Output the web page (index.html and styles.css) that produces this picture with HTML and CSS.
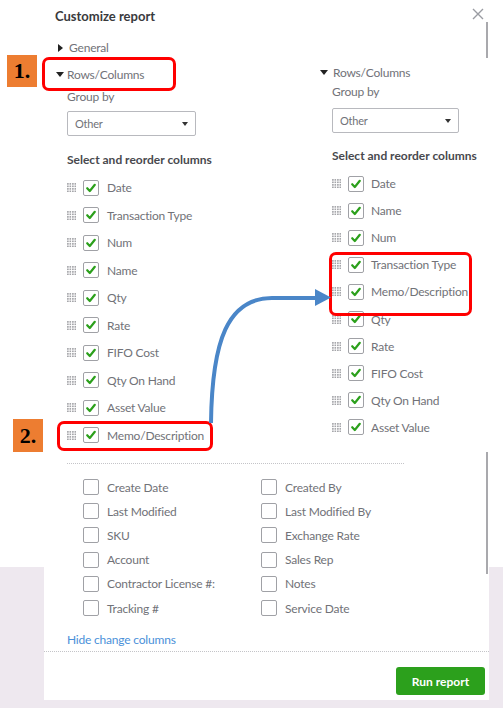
FILE: index.html
```html
<!DOCTYPE html>
<html>
<head>
    <meta charset="utf-8" />
    <title>Customize report</title>
    <link rel="stylesheet" href="styles.css">
</head>
<body>
    <section class="panel">
        <header class="head">
            <h1>Customize report</h1>
            <svg class="close" width="12" height="12" viewBox="0 0 12 12"><path d="M1 1L11 11M11 1L1 11" stroke="#9a9ca2" stroke-width="1.4" fill="none"/></svg>
        </header>
        <div class="scroll">
            <div class="cols">
                <!-- before -->
                <div class="col col-left">
                    <div class="toggle closed">General</div>
                    <div class="toggle open">Rows/Columns</div>
                    <div class="sub">
                        <div class="label">Group by</div>
                        <div class="select">Other<span class="caret"></span></div>
                        <div class="heading">Select and reorder columns</div>
                        <ul class="list">
                            <li><span class="grip"></span><span class="cb on"></span>Date</li>
                            <li><span class="grip"></span><span class="cb on"></span>Transaction Type</li>
                            <li><span class="grip"></span><span class="cb on"></span>Num</li>
                            <li><span class="grip"></span><span class="cb on"></span>Name</li>
                            <li><span class="grip"></span><span class="cb on"></span>Qty</li>
                            <li><span class="grip"></span><span class="cb on"></span>Rate</li>
                            <li><span class="grip"></span><span class="cb on"></span>FIFO Cost</li>
                            <li><span class="grip"></span><span class="cb on"></span>Qty On Hand</li>
                            <li><span class="grip"></span><span class="cb on"></span>Asset Value</li>
                            <li><span class="grip"></span><span class="cb on"></span>Memo/Description</li>
                        </ul>
                    </div>
                </div>
                <!-- after -->
                <div class="col col-right">
                    <div class="toggle open">Rows/Columns</div>
                    <div class="sub">
                        <div class="label">Group by</div>
                        <div class="select">Other<span class="caret"></span></div>
                        <div class="heading">Select and reorder columns</div>
                        <ul class="list">
                            <li><span class="grip"></span><span class="cb on"></span>Date</li>
                            <li><span class="grip"></span><span class="cb on"></span>Name</li>
                            <li><span class="grip"></span><span class="cb on"></span>Num</li>
                            <li><span class="grip"></span><span class="cb on"></span>Transaction Type</li>
                            <li><span class="grip"></span><span class="cb on"></span>Memo/Description</li>
                            <li><span class="grip"></span><span class="cb on"></span>Qty</li>
                            <li><span class="grip"></span><span class="cb on"></span>Rate</li>
                            <li><span class="grip"></span><span class="cb on"></span>FIFO Cost</li>
                            <li><span class="grip"></span><span class="cb on"></span>Qty On Hand</li>
                            <li><span class="grip"></span><span class="cb on"></span>Asset Value</li>
                        </ul>
                    </div>
                </div>
            </div>
            <div class="divider"></div>
            <ul class="extra">
                <li><span class="cb"></span>Create Date</li>
                <li><span class="cb"></span>Created By</li>
                <li><span class="cb"></span>Last Modified</li>
                <li><span class="cb"></span>Last Modified By</li>
                <li><span class="cb"></span>SKU</li>
                <li><span class="cb"></span>Exchange Rate</li>
                <li><span class="cb"></span>Account</li>
                <li><span class="cb"></span>Sales Rep</li>
                <li><span class="cb"></span>Contractor License #:</li>
                <li><span class="cb"></span>Notes</li>
                <li><span class="cb"></span>Tracking #</li>
                <li><span class="cb"></span>Service Date</li>
            </ul>
            <a class="link">Hide change columns</a>
        </div>
        <footer class="foot">
            <button class="run">Run report</button>
        </footer>
        <span class="bar bar-top"></span>
        <span class="bar bar-bottom"></span>
    </section>

    <!-- annotations -->
    <span class="badge badge-1">1.</span>
    <span class="badge badge-2">2.</span>
    <span class="mark mark-1"></span>
    <span class="mark mark-2"></span>
    <span class="mark mark-3"></span>
    <svg class="arrow" width="503" height="708" viewBox="0 0 503 708">
        <path d="M211 423 C212 340 228 298 272 298 L318 298" stroke="#4a86c8" stroke-width="4" fill="none"/>
        <polygon points="315,289 331,297.5 315,306" fill="#4a86c8"/>
    </svg>
</body>
</html>
```

FILE: styles.css
```css
*{
    padding:0;
    margin:0;
    box-sizing:border-box;
}
body{
    width:503px;
    height:708px;
    position:relative;
    overflow:hidden;
    font:12px "Lato", "Open Sans", sans-serif;
    letter-spacing:-0.2px;
    color:#717278;
    background:linear-gradient(#fff 567px, #eee8ef 567px);
}
ul{
    list-style:none;
}

.panel{
    position:relative;
    margin-left:44px;
    width:445px;
    height:700px;
    background:#fff;
    display:flex;
    flex-direction:column;
}
.head{
    height:32px;
    padding:0 11px;
    display:flex;
    align-items:center;
    justify-content:space-between;
}
.head h1{
    font-size:13px;
    font-weight:bold;
    letter-spacing:0;
    color:#393a3d;
}
.close{
    margin-top:-4px;
    margin-right:-6px;
}
.scroll{
    height:620px;
    padding:2px 12px 0;
    border-bottom:1px dotted #c4c4c8;
}
.cols{
    display:flex;
}
.col-left{
    width:264px;
}
.col-right{
    padding-top:25px;
}

.toggle{
    height:27px;
    line-height:27px;
    display:flex;
    align-items:center;
}
.toggle::before{
    content:"";
    width:0;
    height:0;
    border-style:solid;
}
.toggle.closed::before{
    border-width:4px 0 4px 5px;
    border-color:transparent transparent transparent #222;
    margin:0 6px 0 2px;
}
.toggle.open::before{
    border-width:5px 4px 0 4px;
    border-color:#222 transparent transparent transparent;
    margin:0 3px 0 0;
}
.col-right .toggle.open::before{
    margin-right:5px;
}

.sub{
    padding-left:11px;
}
.col-right .sub{
    padding-left:12px;
}
.label{
    height:18px;
    line-height:18px;
}
.col-right .label{
    margin-top:-3px;
}
.select{
    margin-top:5px;
    width:129px;
    height:25px;
    border:1px solid #b8b9be;
    border-radius:2px;
    padding:0 7px;
    display:flex;
    align-items:center;
    justify-content:space-between;
    font-size:11px;
}
.col-right .select{
    margin-top:7px;
    width:127px;
}
.caret{
    border-style:solid;
    border-width:4px 3.5px 0 3.5px;
    border-color:#333 transparent transparent transparent;
}
.heading{
    margin-top:14px;
    height:20px;
    line-height:20px;
    font-weight:bold;
    letter-spacing:0;
    color:#48494e;
}
.col-right .heading{
    margin-top:13px;
}
.list{
    margin-top:4px;
}
.list li{
    height:27.5px;
    display:flex;
    align-items:center;
}
.col-right .list li{
    height:27.1px;
}
.grip{
    width:9px;
    height:9px;
    margin-right:7px;
    background-image:radial-gradient(circle at 1px 1px, #a3a4a8 0.8px, transparent 1px);
    background-size:2.5px 2.5px;
}
.cb{
    width:16px;
    height:16px;
    border:1px solid #a0a1a6;
    border-radius:2px;
    margin-right:8px;
    flex-shrink:0;
}
.col-right .cb{
    margin-right:7px;
}
.cb.on{
    background:url("data:image/svg+xml,%3Csvg xmlns='http://www.w3.org/2000/svg' width='14' height='14' viewBox='0 0 14 14'%3E%3Cpath d='M3.2 7.2l2.6 2.8 5-6.2' stroke='%232ca01c' stroke-width='2.2' fill='none' stroke-linecap='round' stroke-linejoin='round'/%3E%3C/svg%3E") center no-repeat;
}

.divider{
    margin:14px 0 0 11px;
    width:337px;
    border-top:1px dotted #c4c4c8;
}
.extra{
    margin:11px 0 0 27px;
    display:grid;
    grid-template-columns:178px 178px;
}
.extra li{
    height:24.2px;
    display:flex;
    align-items:center;
}
.link{
    display:block;
    margin:11px 0 0 11px;
    height:18px;
    line-height:18px;
    color:#4a90d9;
}

.foot{
    flex-grow:1;
    display:flex;
    justify-content:flex-end;
    padding:15px 4px 0 0;
}
.run{
    width:89px;
    height:28px;
    border:none;
    border-radius:3px;
    background:#2ca01c;
    color:#fff;
    font:bold 12px "Lato", "Open Sans", sans-serif;
}

/* scroll bar bits */
.bar{
    position:absolute;
    left:442px;
    width:2px;
    background:#a9a9ad;
}
.bar-top{
    top:22px;
    height:36px;
}
.bar-bottom{
    top:452px;
    height:122px;
}

/* annotations */
.badge{
    position:absolute;
    width:30px;
    height:32px;
    background:#ed7d31;
    color:#000;
    font:bold 22px "Liberation Serif", serif;
    letter-spacing:0;
    display:flex;
    align-items:center;
    justify-content:center;
}
.badge-1{
    left:7px;
    top:55px;
}
.badge-2{
    left:13px;
    top:419px;
    height:33px;
}
.mark{
    position:absolute;
    border:3.5px solid #ff0000;
    border-radius:7px;
}
.mark-1{
    left:42px;
    top:57px;
    width:134px;
    height:34px;
}
.mark-2{
    left:57px;
    top:421px;
    width:156px;
    height:30px;
}
.mark-3{
    left:329px;
    top:252px;
    width:143px;
    height:64px;
}
.arrow{
    position:absolute;
    left:0;
    top:0;
    pointer-events:none;
}
```
